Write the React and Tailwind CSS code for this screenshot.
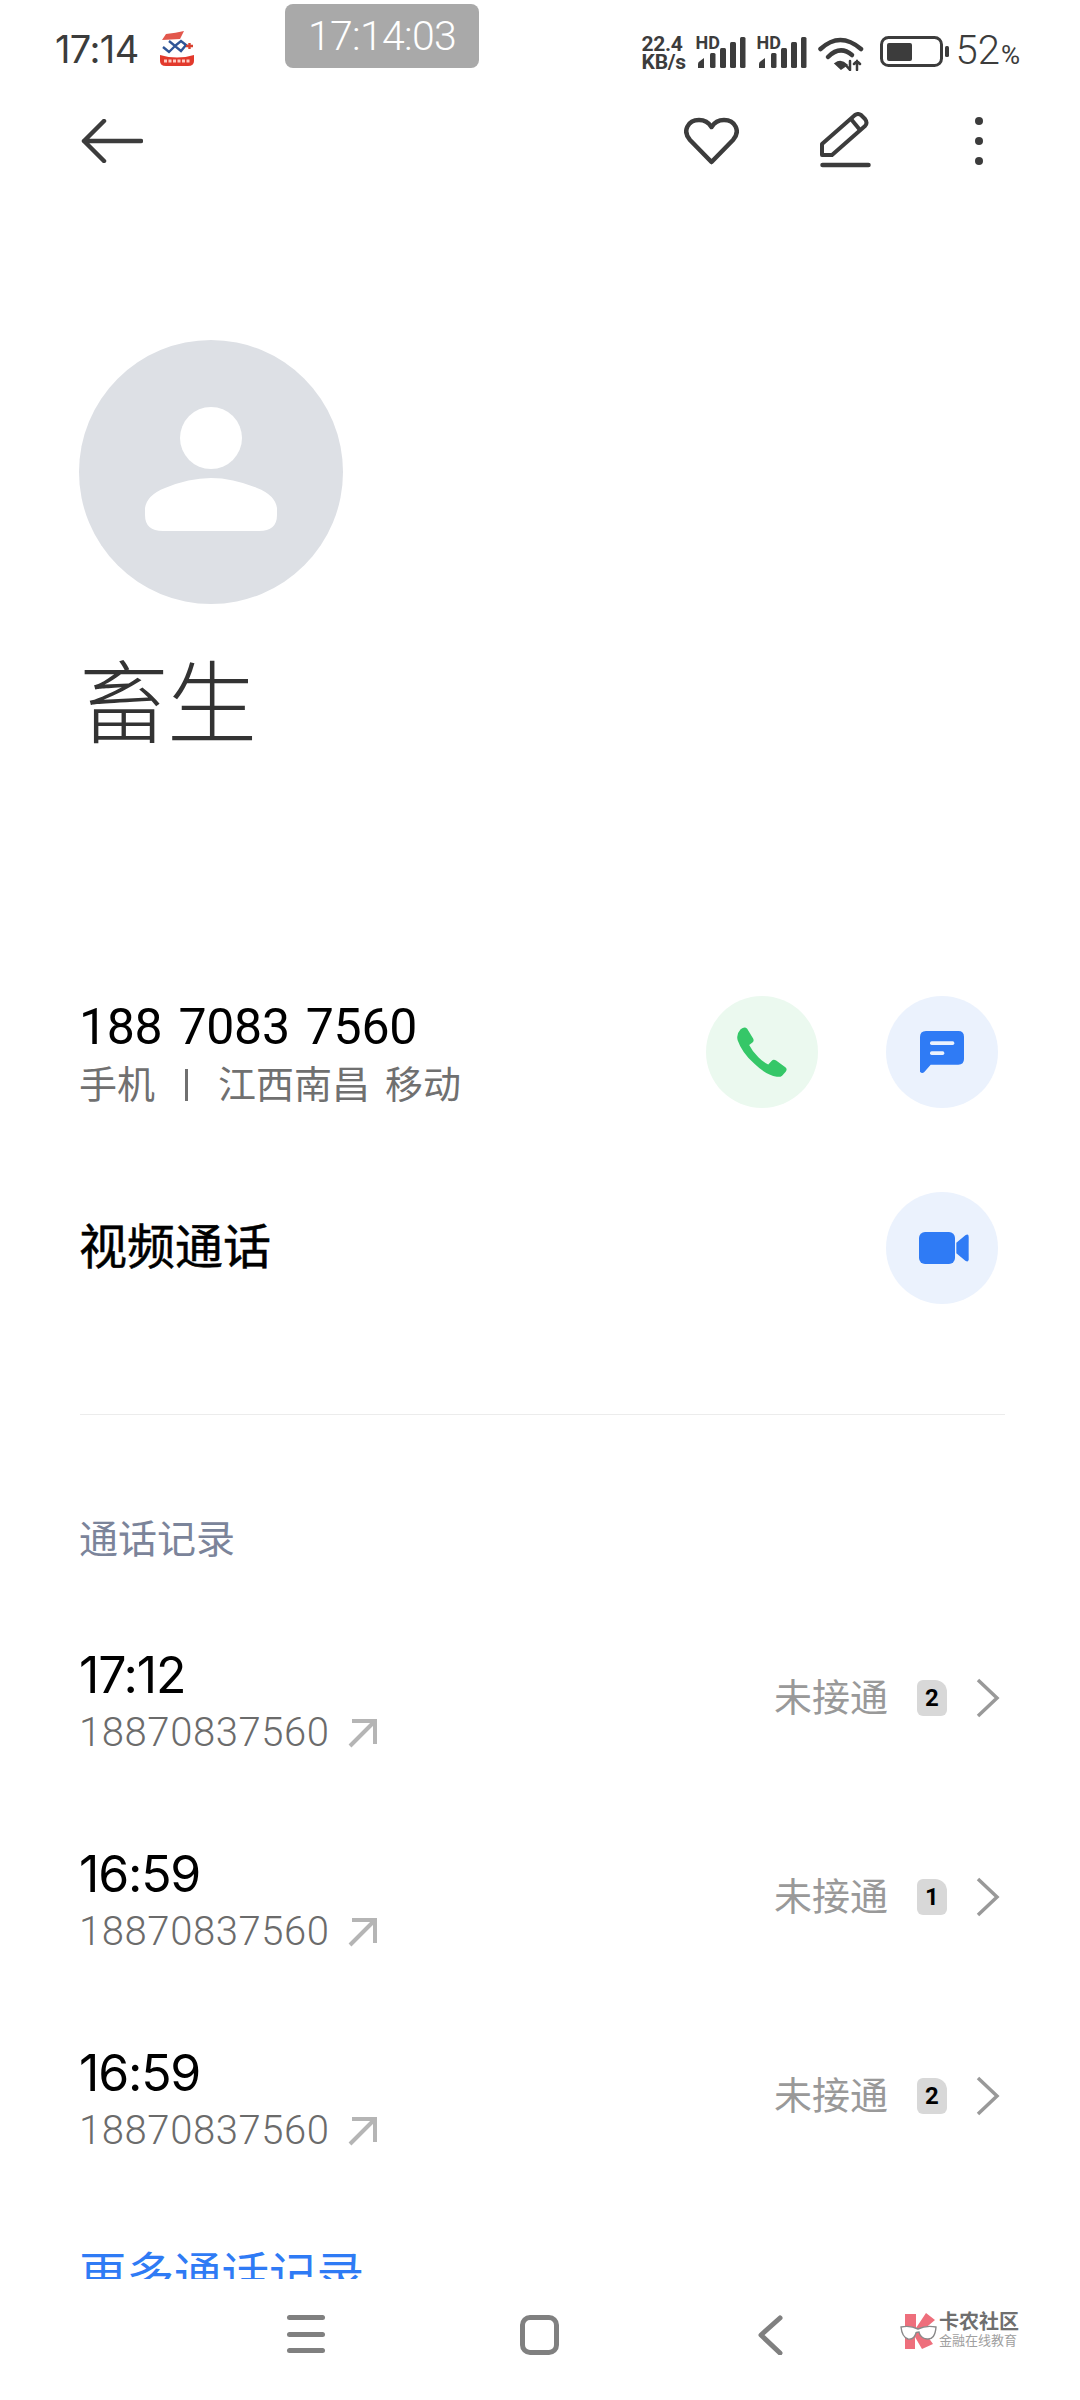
const sans = "font-['Roboto','Noto_Sans_CJK_SC',sans-serif]";

const calls = [
  { time: "17:12", count: 2 },
  { time: "16:59", count: 1 },
  { time: "16:59", count: 2 },
];

function Signal() {
  return (
    <div className="relative w-[48px] h-[33px]">
      <span className="absolute top-0 left-[-2px] text-[18px] leading-[13px] font-bold text-[#3c3c3c]">HD</span>
      <svg className="absolute inset-0" width="48" height="33" viewBox="0 0 48 33" fill="#3c3c3c">
        <path d="M0 32V28Q0 26 2 25L6 22V32Z" />
        <rect x="12" y="17" width="5.5" height="15" rx="1.5" />
        <rect x="22" y="12" width="6" height="20" rx="1.5" />
        <rect x="32" y="6" width="6" height="26" rx="1.5" />
        <rect x="42" y="1" width="5.5" height="31" rx="1.5" />
      </svg>
    </div>
  );
}

function StatusBar() {
  return (
    <div className="relative h-[74px] pt-[25px] flex justify-between items-start pl-[55px] pr-[60px]">
      <div className="flex items-center">
        <span className="font-['Inter'] text-[38px] leading-[48px] text-[#3c3c3c] tracking-[-0.6px]">17:14</span>
        <svg className="ml-[21px]" width="34" height="36" viewBox="0 0 34 36">
          <path d="M2 9L6 3Q16 2 24 0L20 8Z" fill="#e2574c" />
          <path d="M3 16L9 21L15 15L21 20L26 14L21 10L15 15L9 10" fill="none" stroke="#2f5597" strokeWidth="2.4" />
          <path d="M26 15H33M29.5 12V18" stroke="#d8402f" strokeWidth="2.4" />
          <path d="M0 24Q17 29 34 24V30Q34 35 28 35H6Q0 35 0 30Z" fill="#e2392c" />
          <path d="M4 30H30" stroke="#ffc9c0" strokeWidth="3" strokeDasharray="3 1.5" />
        </svg>
      </div>
      <div className="absolute left-[285px] top-[4px] w-[194px] h-[64px] rounded-[8px] bg-[#a9a9a9] flex items-center justify-center text-[41px] font-light text-white leading-none tracking-[-0.7px]">
        17:14:03
      </div>
      <div className="flex items-start pt-[11px]">
        <div className="w-[46px] font-bold text-[#3c3c3c] text-[21px] leading-[18px] -mt-[1px] tracking-[-0.3px]">
          <div>22.4</div>
          <div>KB/s</div>
        </div>
        <div className="ml-[10px]"><Signal /></div>
        <div className="ml-[13px]"><Signal /></div>
        <svg className="ml-[10px]" width="48" height="35" viewBox="0 0 46 35" fill="none" stroke="#3c3c3c" strokeLinecap="round">
          <path d="M2.5 13Q22 -5 43 13" strokeWidth="4.5" />
          <path d="M10 21Q22 9 34 19" strokeWidth="4.5" />
          <path d="M17 27.5L23 33L29 29Q23 23 17 27.5Z" fill="#3c3c3c" strokeWidth="1.5" />
          <path d="M32 25V34M28.5 30L32 34" strokeWidth="2.5" />
          <path d="M39 34V25M36 28L39 25L42 28" strokeWidth="2.5" />
        </svg>
        <svg className="ml-[15px]" width="70" height="31" viewBox="0 0 70 31">
          <rect x="1.5" y="1.5" width="60" height="28" rx="7" fill="none" stroke="#3c3c3c" strokeWidth="3" />
          <rect x="7" y="7" width="25" height="18" rx="2" fill="#3c3c3c" />
          <rect x="65" y="10" width="4" height="11" rx="1.5" fill="#3c3c3c" />
        </svg>
        <div className="ml-[6px] -mt-[9px] flex items-baseline text-[#3c3c3c] font-light">
          <span className="text-[40px] leading-[48px]">52</span>
          <span className="text-[26px] leading-none font-normal ml-[1px]">%</span>
        </div>
      </div>
    </div>
  );
}

function Toolbar() {
  return (
    <div className="h-[134px] flex items-center pl-[81px]">
      <svg width="62" height="44" viewBox="0 0 62 44" fill="none" stroke="#3c3c3c" strokeWidth="4.5" strokeLinecap="round" strokeLinejoin="round">
        <path d="M60 22H3M23 2L3 22L23 42" />
      </svg>
      <svg className="ml-[541px]" width="55" height="48" viewBox="0 0 55 48" fill="none" stroke="#3c3c3c" strokeWidth="4.5" strokeLinejoin="round">
        <path d="M27.5 45L6 23C-2 14 4 3 15 3C21 3 25 6 27.5 10C30 6 34 3 40 3C51 3 57 14 49 23Z" />
      </svg>
      <svg className="ml-[81px] -mt-[2px]" width="51" height="56" viewBox="0 0 51 56" fill="none" stroke="#3c3c3c" strokeLinejoin="round">
        <path d="M2 43V32L35 3Q38 1 41 3L45 7Q48 11 45 14L12 43Z" strokeWidth="4" />
        <path d="M31 7L40 18" strokeWidth="4" />
        <path d="M2.5 53H48.5" strokeWidth="4.5" strokeLinecap="round" />
      </svg>
      <div className="ml-[104px] flex flex-col gap-[12px]">
        <span className="w-[8px] h-[8px] rounded-full bg-[#3c3c3c]" />
        <span className="w-[8px] h-[8px] rounded-full bg-[#3c3c3c]" />
        <span className="w-[8px] h-[8px] rounded-full bg-[#3c3c3c]" />
      </div>
    </div>
  );
}

function Avatar() {
  return (
    <div className="w-[264px] h-[264px] rounded-full bg-[#dde0e5] flex items-center justify-center">
      <svg className="mb-[6px]" width="132" height="124" viewBox="0 0 132 124" fill="white">
        <circle cx="66" cy="31" r="31" />
        <path d="M18 124Q0 124 0 108V101Q2 88 20 81Q44 71 66 71Q88 71 112 81Q130 88 132 101V108Q132 124 114 124Z" />
      </svg>
    </div>
  );
}

function RoundBtn({ green, children }) {
  return (
    <div className={`w-[112px] h-[112px] rounded-full flex items-center justify-center ${green ? "bg-[#ebf9ef]" : "bg-[#ebf2fd]"}`}>
      {children}
    </div>
  );
}

function CallRow({ time, count }) {
  return (
    <div className="h-[199px] flex justify-between items-start">
      <div className="pt-[4px]">
        <div className="font-['Inter'] text-[50px] leading-[50px] text-black tracking-[-1.2px]">{time}</div>
        <div className="mt-[9px] flex items-center text-[40px] leading-[48px] text-[#6b6b6b] font-light tracking-[0.6px]">
          <span>18870837560</span>
          <svg className="ml-[18px]" width="30" height="30" viewBox="0 0 30 30" fill="none" stroke="#b5b5b5" strokeWidth="4">
            <path d="M2 28L27 3M4 3H27V26" />
          </svg>
        </div>
      </div>
      <div className="flex items-center mt-[33px] h-[38px]">
        <span className="text-[38px] leading-none text-[#999]">未接通</span>
        <span className="ml-[29px] w-[30px] h-[36px] rounded-[6px] rounded-tr-[12px] bg-[#d8d8d8] flex items-center justify-center text-[24px] font-bold text-black leading-none">{count}</span>
        <svg className="ml-[29px]" width="24" height="40" viewBox="0 0 24 40" fill="none" stroke="#999" strokeWidth="3.5">
          <path d="M2 2L21 20L2 38" />
        </svg>
      </div>
    </div>
  );
}

function NavBar() {
  return (
    <div className="flex-1 flex items-start pt-[36px] pl-[287px]">
      <div className="w-[38px] h-[38px] flex flex-col justify-between">
        <span className="h-[5px] rounded-full bg-[#808080]" />
        <span className="h-[5px] rounded-full bg-[#808080]" />
        <span className="h-[5px] rounded-full bg-[#808080]" />
      </div>
      <div className="ml-[195px] w-[39px] h-[40px] rounded-[10px] border-[5px] border-[#808080]" />
      <svg className="ml-[198px]" width="26" height="40" viewBox="0 0 26 40" fill="none" stroke="#808080" strokeWidth="5" strokeLinecap="round" strokeLinejoin="round">
        <path d="M23 3L4 20L23 38" />
      </svg>
      <div className="ml-[117px] -mt-[3px] flex">
        <svg width="38" height="37" viewBox="0 0 38 37">
          <path d="M5 2H16V16L26 1L35 8L23 18L33 32L22 37L15 25V37H5Z" fill="#ee6f7c" />
          <path d="M1 15Q10 13 18 17Q26 13 36 15Q35 28 27 27Q20 26 19 20Q16 20 16 21Q14 28 8 27Q2 25 1 15Z" fill="#fff" stroke="#8a8a8a" strokeWidth="1.4" />
        </svg>
        <div className="ml-[1px] text-[#6f6f6f]">
          <div className="text-[20px] leading-[20px] font-bold w-[80px]">卡农社区</div>
          <div className="mt-[2px] text-[13px] leading-[14px] text-[#a0a0a0] w-[80px]">金融在线教育</div>
        </div>
      </div>
    </div>
  );
}

export default function App() {
  return (
    <div className={`${sans} w-[1080px] h-[2400px] bg-white flex flex-col overflow-hidden`}>
      <div className="h-[2279px] overflow-hidden shrink-0">
        <StatusBar />
        <Toolbar />
        <div className="pl-[79px] pt-[132px]">
          <Avatar />
          <div className="mt-[47px] text-[90px] leading-[110px] font-light text-[#333] tracking-[-2px]">畜生</div>
        </div>
        <div className="mt-[240px] pl-[79px] pr-[82px]">
          <div className="flex justify-between items-start">
            <div>
              <div className="text-[50px] leading-[50px] text-black tracking-[-0.3px] [word-spacing:4px] pt-[1px]">188 7083 7560</div>
              <div className="mt-[8px] flex items-center text-[38px] leading-[50px] text-[#707070]">
                <span>手机</span>
                <span className="mx-[30px] w-[3px] h-[32px] bg-[#707070]" />
                <span>江西南昌</span>
                <span className="ml-[15px]">移动</span>
              </div>
            </div>
            <div className="flex gap-[68px] mt-[-5px]">
              <RoundBtn green>
                <svg width="52" height="52" viewBox="294 198 158 156">
                  <path d="M308 207Q320 197 328 205L346 235Q350 242 344 247L334 255Q344 275 362 292Q378 308 392 314L402 303Q408 297 416 302L444 322Q451 328 445 336L434 348Q428 353 418 351Q385 346 350 312Q312 278 299 240Q294 222 308 207Z" fill="#35c768" />
                </svg>
              </RoundBtn>
              <RoundBtn>
                <svg width="44" height="43" viewBox="840 214 132 129">
                  <path d="M858 214H955Q972 214 972 231V298Q972 315 955 315H872L853 337Q846 343 840 336V232Q840 214 858 214Z" fill="#2f7bf5" />
                  <rect x="870" y="245" width="73" height="11" rx="5" fill="#ebf2fd" />
                  <rect x="870" y="275" width="43" height="11" rx="5" fill="#ebf2fd" />
                </svg>
              </RoundBtn>
            </div>
          </div>
          <div className="mt-[82px] flex justify-between items-center">
            <span className="text-[48px] leading-none text-black [-webkit-text-stroke:0.5px_black]">视频通话</span>
            <RoundBtn>
              <svg className="ml-[3px]" width="50" height="32" viewBox="838 816 150 96">
                <rect x="838" y="816" width="108" height="96" rx="18" fill="#2f7bf5" />
                <path d="M950 848L977 826Q987 820 987 830V898Q987 908 977 902L950 880Z" fill="#2f7bf5" />
              </svg>
            </RoundBtn>
          </div>
        </div>
        <div className="mt-[110px] ml-[80px] w-[925px] h-[1px] bg-[#ececec]" />
        <div className="mt-[102px] ml-[79px] text-[39px] leading-[46px] text-[#7b849a]">通话记录</div>
        <div className="mt-[83px] pl-[79px] pr-[80px]">
          {calls.map((c, i) => (
            <CallRow key={i} time={c.time} count={c.count} />
          ))}
          <div className="mt-[3px] text-[47.5px] leading-[60px] text-[#2f7bf5]">更多通话记录</div>
        </div>
      </div>
      <NavBar />
    </div>
  );
}
